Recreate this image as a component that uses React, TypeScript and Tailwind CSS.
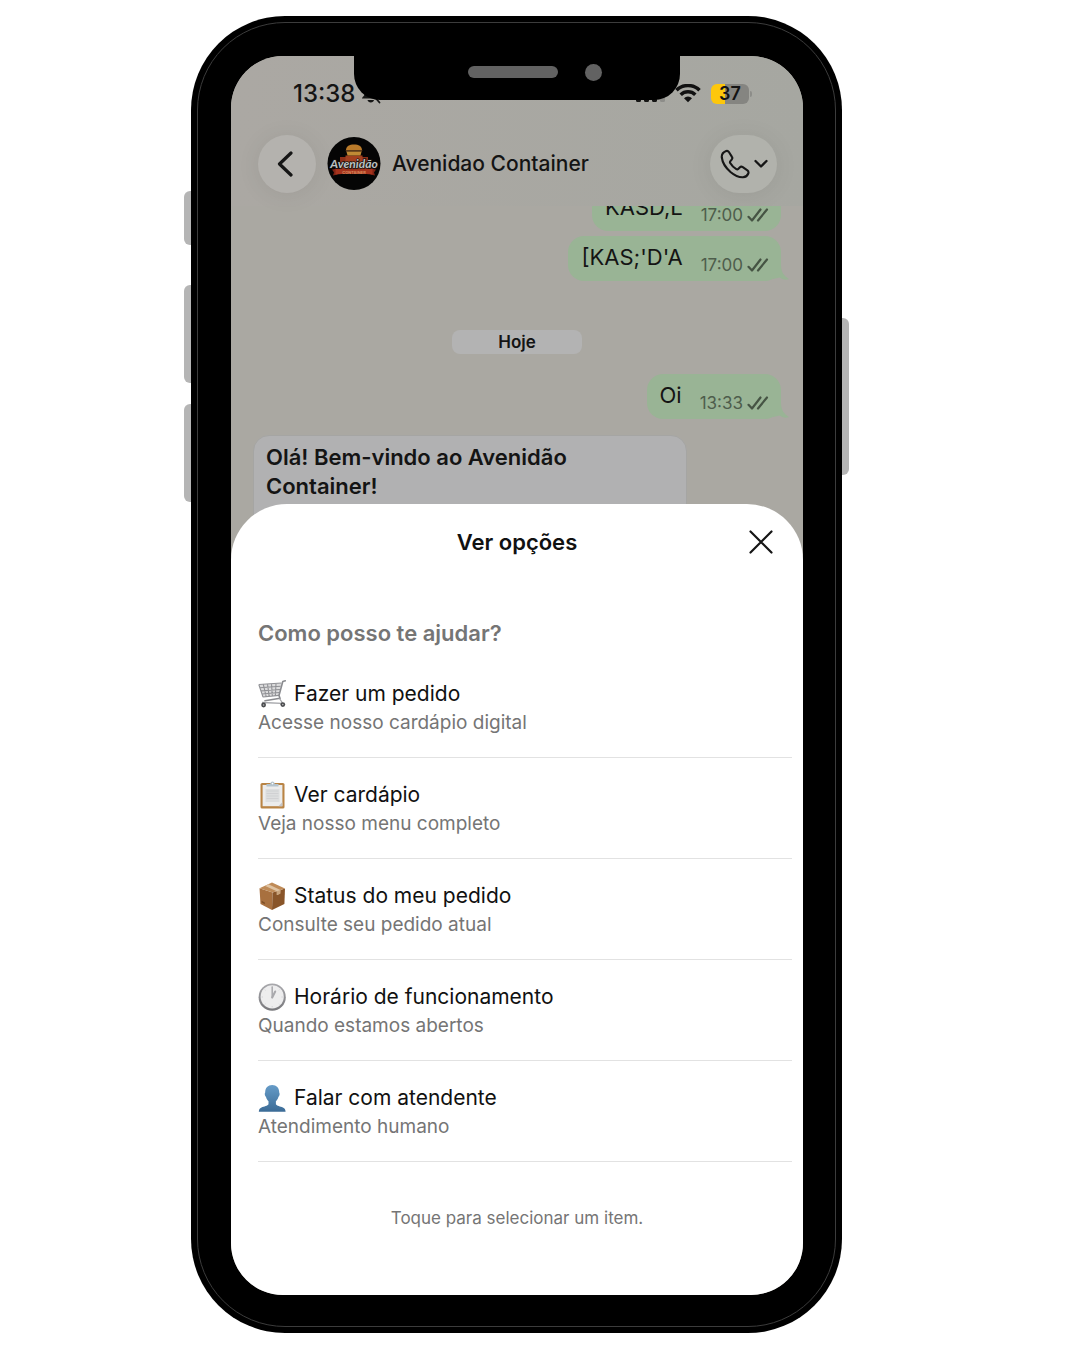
import type { ReactNode } from "react";

interface Option {
  id: string;
  title: string;
  description: string;
  icon: ReactNode;
}

const OPTIONS: Option[] = [
  { id: "order", title: "Fazer um pedido", description: "Acesse nosso cardápio digital", icon: <CartIcon /> },
  { id: "menu", title: "Ver cardápio", description: "Veja nosso menu completo", icon: <ClipboardIcon /> },
  { id: "status", title: "Status do meu pedido", description: "Consulte seu pedido atual", icon: <BoxIcon /> },
  { id: "hours", title: "Horário de funcionamento", description: "Quando estamos abertos", icon: <ClockIcon /> },
  { id: "agent", title: "Falar com atendente", description: "Atendimento humano", icon: <PersonIcon /> },
];

function CartIcon() {
  return (
    <svg viewBox="0 0 28 28" className="size-7 shrink-0" fill="none" aria-hidden="true">
      <path d="M.8 4.500 23.500 3 21 15.400 5 17z" fill="#dcdcdd" />
      <path
        d="M.8 4.500 23.500 3M1.800 7.700l20.800-1.400M2.900 10.900l19-1.400M4 14l17.300-1.500M5 17l16-1.600M.8 4.500 5 17M5.300 4.300l2.900 12.300M9.500 4l1.700 12.300M13.500 3.800l.8 12.200M18 3.500l-.6 12.100"
        stroke="#909195"
        strokeWidth="1.100"
      />
      <path d="M27.300.8 24.800 1.500 21 15.500 22 18.300 7 20.800" stroke="#8a8b8f" strokeWidth="1.600" strokeLinecap="round" strokeLinejoin="round" />
      <path d="m21.500 18.500 3 4.500M4 22.500l20 .8" stroke="#a5a6aa" strokeWidth="1.300" />
      <circle cx="5.600" cy="25" r="2.400" fill="#4b4c4f" />
      <circle cx="24.800" cy="24.600" r="2.400" fill="#4b4c4f" />
      <circle cx="5.600" cy="25" r=".8" fill="#bbb" />
      <circle cx="24.800" cy="24.600" r=".8" fill="#bbb" />
    </svg>
  );
}

function ClipboardIcon() {
  return (
    <svg viewBox="0 0 28 28" className="size-7 shrink-0" fill="none" aria-hidden="true">
      <rect x="2.500" y="2" width="24" height="25.500" rx="1.600" fill="#b98445" />
      <rect x="4.600" y="4" width="19.800" height="21.200" fill="#ececec" />
      <path d="M20.500 25.200 24.400 21v4.200z" fill="#c6c6c8" />
      <path d="M7.500 8h14v13h-14z" fill="#dddedf" />
      <path d="M8.500 10h12M8.500 12.500h12M8.500 15h12M8.500 17.500h12" stroke="#d0d1d3" strokeWidth="1.200" />
      <path d="M8.500 5.600V3h3.700C12.400 1.400 13.200.5 14.500.5s2.100.9 2.300 2.500h3.700v2.600z" fill="#b4c3cd" />
      <circle cx="14.500" cy="2.600" r=".8" fill="#fff" />
    </svg>
  );
}

function BoxIcon() {
  return (
    <svg viewBox="0 0 28 28" className="size-7 shrink-0" fill="none" aria-hidden="true">
      <path d="M1.500 6.200 14.600 10.600 14 28 2.500 22z" fill="#a8703f" />
      <path d="M14.600 10.600 27 6.600 26.400 22 14 28z" fill="#895529" />
      <path d="M1.500 6.200 14 .6 27 6.600 14.600 10.600z" fill="#bf8b58" />
      <path d="M7.200 3.900 10.400 2.300 22.400 7.900 22.200 11.800 18.800 13V9.300z" fill="#dfc3a2" />
      <path d="m18.800 9.300 3.600-1.400-.2 3.900-3.400 1.200z" fill="#c9a47c" />
      <path d="m3.600 18.800 3.200 1.600v1.900l-3.200-1.700z" fill="#7e4e26" />
    </svg>
  );
}

function ClockIcon() {
  return (
    <svg viewBox="0 0 28 28" className="size-7 shrink-0" fill="none" aria-hidden="true">
      <defs>
        <linearGradient id="clock-rim" x1="0" y1="0" x2="0" y2="1">
          <stop offset="0" stopColor="#a9a9ad" />
          <stop offset="1" stopColor="#77777b" />
        </linearGradient>
      </defs>
      <circle cx="14.200" cy="14.200" r="13.600" fill="url(#clock-rim)" />
      <circle cx="14.200" cy="13.800" r="11.600" fill="#ededee" />
      <path
        d="M14.200 3.400v1.400M14.200 23v1.400M3.600 14H5M23.400 14h1.400M6.700 6.500l.8.8M21 20.800l.7.7M6.700 21.500l.8-.7M21.700 6.500l-.8.8"
        stroke="#d3d3d6"
        strokeWidth="1"
      />
      <path d="M14.200 14.500V4" stroke="#a8a8ac" strokeWidth="1.500" strokeLinecap="round" />
      <path d="m14.200 14.500 3-6" stroke="#a8a8ac" strokeWidth="2" strokeLinecap="round" />
    </svg>
  );
}

function PersonIcon() {
  return (
    <svg viewBox="0 0 28 28" className="size-7 shrink-0" aria-hidden="true">
      <defs>
        <linearGradient id="person-fill" x1="0" y1="0" x2="0" y2="1">
          <stop offset="0" stopColor="#669cc8" />
          <stop offset="1" stopColor="#3b6b96" />
        </linearGradient>
      </defs>
      <path
        d="M14.200.9c4.300 0 7 2.900 7 7.200 0 1 .5 1.200.4 2.300-.1 1.300-.8 1.500-1.200 2.600-.6 2.200-1.500 3.300-2.500 4.300v3c.8 1.700 4.500 2.200 7 3.200 1.900.8 2.500 2.100 2.700 4.300H.8c.2-2.200.8-3.500 2.700-4.300 2.500-1 6.200-1.500 7-3.200v-3c-1-1-1.900-2.100-2.500-4.300-.4-1.100-1.100-1.300-1.200-2.600-.1-1.100.4-1.300.4-2.300 0-4.300 2.700-7.200 7-7.200z"
        fill="url(#person-fill)"
      />
    </svg>
  );
}

function MutedBellIcon() {
  return (
    <svg viewBox="0 0 20 20" className="size-5" fill="#161615" aria-hidden="true">
      <path d="M1 14.500c0-1.500 3-2.500 3-6.500 0-3.500 2.500-6 6-6s6 2.500 6 6c0 4 1 5 1 6.500z" />
      <path d="M6.500 16h6.500c-.3 1.600-1.500 2.500-3.200 2.500S6.800 17.600 6.500 16z" />
      <path d="m2.500 1 15 17" stroke="#aba9a4" strokeWidth="3" />
      <path d="m4 2 14.500 16.500" stroke="#161615" strokeWidth="1.800" strokeLinecap="round" />
    </svg>
  );
}

function SignalIcon() {
  return (
    <svg viewBox="0 0 29 20" className="h-5 w-[29px]" fill="#161615" aria-hidden="true">
      <rect x="0" y="12" width="5" height="6" rx="1.500" />
      <rect x="8" y="9" width="5" height="9" rx="1.500" />
      <rect x="16" y="5" width="5" height="13" rx="1.500" />
      <rect x="24" y="1" width="5" height="17" rx="1.500" fill="#8d8d89" />
    </svg>
  );
}

function WifiIcon() {
  return (
    <svg viewBox="0 0 26 20" className="h-5 w-[26px]" fill="none" stroke="#111" strokeWidth="3.500" aria-hidden="true">
      <path d="M1.500 6.200a16.500 16.500 0 0 1 23 0" />
      <path d="M5.700 10.800a10.500 10.500 0 0 1 14.600 0" />
      <path d="M13 18.200 9 14.200a5.800 5.800 0 0 1 8 0z" fill="#111" stroke="none" />
    </svg>
  );
}

function Checks() {
  return (
    <svg viewBox="0 0 22 14" className="h-3.5 w-[22px]" fill="none" stroke="#465444" strokeWidth="2.200" strokeLinecap="round" strokeLinejoin="round" aria-hidden="true">
      <path d="m1.500 8.800 3.500 3.700L13.500 1.500" />
      <path d="M11 12.500 20 1.500" />
    </svg>
  );
}

function Avatar() {
  return (
    <svg viewBox="0 0 54 54" className="size-[54px] shrink-0" role="img" aria-label="Avenidão Container">
      <circle cx="27" cy="26.500" r="26.500" fill="#050505" />
      <path d="M13 20h28v17H13z" fill="#8c2f19" />
      <path d="M18.500 18.500h17V28h-17z" fill="#a3401f" />
      <path d="M19 13c.3-4 3.300-5.500 8-5.500s7.700 1.500 8 5.500z" fill="#b97a2a" />
      <path d="M18.500 13h17l-.8 2H19.300z" fill="#5b3a1a" />
      <path d="M19.500 14.800h15l-1 3.700h-13z" fill="#c08a35" />
      <path d="M5 32.500l5.500-1v6l-4.500 1 1-3zM49 32.500l-5.500-1v6l4.500 1-1-3z" fill="#7e2314" />
      <path d="M8.500 31.500c12 1.500 25 1.500 37 0v6c-12-1.500-25-1.500-37 0z" fill="#a5331d" />
      <text
        x="27"
        y="30.500"
        textAnchor="middle"
        fontSize="12"
        fontStyle="italic"
        fontWeight="700"
        fontFamily="Lato, sans-serif"
        fill="#bcc2c2"
        stroke="#15110f"
        strokeWidth="1.500"
        paintOrder="stroke"
      >
        Avenidão
      </text>
      <text x="27" y="36.500" textAnchor="middle" fontSize="4" fontWeight="700" fontFamily="Inter, sans-serif" fill="#d8895c">
        CONTAINER
      </text>
    </svg>
  );
}

function StatusBar() {
  return (
    <div className="flex h-[76px] items-center justify-between pr-[51px] pl-[62px]">
      <div className="flex items-center gap-1.5">
        <span className="text-[24px] leading-7 font-medium">13:38</span>
        <MutedBellIcon />
      </div>
      <div className="flex items-center gap-2.5">
        <SignalIcon />
        <WifiIcon />
        <div className="flex items-center gap-px">
          <span className="flex h-5 w-[38px] items-center justify-center rounded-md bg-linear-to-r from-[#fdc70b] from-37% to-[#858581] to-37% text-[18px] leading-5 font-semibold">
            37
          </span>
          <span className="h-1.5 w-0.5 rounded-r-full bg-[#8d8d89]" />
        </div>
      </div>
    </div>
  );
}

function ChatHeader() {
  return (
    <div className="flex items-center gap-[11px] pt-[3px] pr-[26px] pb-[13px] pl-[27px]">
      <button
        type="button"
        aria-label="Voltar"
        className="flex size-[58px] shrink-0 items-center justify-center rounded-full bg-[#b4b2ae] shadow-[0_2px_24px_rgba(0,0,0,0.07)]"
      >
        <svg viewBox="0 0 16 28" className="mr-1 h-7 w-4" fill="none" stroke="#161616" strokeWidth="3.200" strokeLinecap="round" strokeLinejoin="round" aria-hidden="true">
          <path d="M14 3 2.500 14 14 25" />
        </svg>
      </button>
      <Avatar />
      <h1 className="min-w-0 flex-1 truncate text-[21px] leading-7 font-medium">Avenidao Container</h1>
      <button
        type="button"
        aria-label="Ligar"
        className="flex h-[58px] w-[67px] shrink-0 items-center justify-center gap-1 rounded-full bg-[#b1b2ac] shadow-[0_2px_24px_rgba(0,0,0,0.07)]"
      >
        <svg viewBox="0 0 30 30" className="size-[30px]" fill="none" stroke="#161616" strokeWidth="2.100" strokeLinejoin="round" aria-hidden="true">
          <path d="M6.200 2C3.500 3 1.500 5.500 1.800 8.500 2.500 14 6 19 10.500 23c4 3.400 8.500 5.500 12.500 5.300 2.500-.2 4.500-1.800 5.300-3.800.5-1.300.1-2.300-.9-3.100l-4.600-3.200c-1.100-.8-2.200-.7-3.100.2l-1.500 1.500c-.6.6-1.200.6-1.900.2-2.500-1.500-4.700-3.700-6.100-6.100-.4-.7-.3-1.300.2-1.900l1.300-1.500c.8-.9.8-2 .1-3L8.900 3C8.200 2 7.300 1.600 6.200 2z" />
        </svg>
        <svg viewBox="0 0 14 10" className="h-2.5 w-3.5" fill="none" stroke="#161616" strokeWidth="2.300" strokeLinecap="round" strokeLinejoin="round" aria-hidden="true">
          <path d="m1.500 2 5.500 5.500L12.500 2" />
        </svg>
      </button>
    </div>
  );
}

function SentBubble({ text, time, tail = true }: { text: string; time: string; tail?: boolean }) {
  return (
    <div className="relative flex h-[45px] items-start gap-[18px] rounded-2xl bg-[#99b495] pr-3 pl-[13px]">
      <span className="pt-[7px] text-[22px] leading-7">{text}</span>
      <span className="flex items-center gap-1 pt-[19px] text-[17px] leading-5 text-[#4e5d4c]">
        {time}
        <Checks />
      </span>
      {tail && (
        <svg viewBox="0 0 18 18" className="absolute -right-2 bottom-0 size-[18px]" fill="#99b495" aria-hidden="true">
          <path d="M2 16V2h8c0 7 3 11 8 14-3 1.500-7 .5-9-1.500z" />
        </svg>
      )}
    </div>
  );
}

function ChatHistory() {
  return (
    <div className="overflow-hidden px-[22px]">
      <div className="-mt-5 flex flex-col items-end gap-[5px]">
        <SentBubble text="KASD,L" time="17:00" tail={false} />
        <SentBubble text="[KAS;'D'A" time="17:00" />
      </div>
      <div className="mx-auto mt-[49px] mb-5 w-[130px] rounded-lg bg-[#b3b3b3] text-center text-[17px] leading-6 font-semibold">
        Hoje
      </div>
      <div className="flex justify-end">
        <SentBubble text="Oi" time="13:33" />
      </div>
      <div className="mt-4 h-[129px] max-w-[434px] rounded-2xl border border-[#a5a5a3] bg-[#b1b1b2] px-3 pt-[7px]">
        <p className="max-w-[340px] text-[22px] leading-[29px] font-semibold">Olá! Bem-vindo ao Avenidão Container!</p>
      </div>
    </div>
  );
}

function OptionsSheet() {
  return (
    <section role="dialog" aria-labelledby="sheet-title" className="relative -mt-[60px] rounded-t-[56px] bg-white pb-[65px] text-[#111]">
      <header className="grid grid-cols-[1fr_auto_1fr] items-center px-[26px] pt-[18px]">
        <h2 id="sheet-title" className="col-start-2 text-[22px] leading-10 font-semibold">
          Ver opções
        </h2>
        <button type="button" aria-label="Fechar" className="flex size-8 items-center justify-center justify-self-end">
          <svg viewBox="0 0 24 24" className="size-6" fill="none" stroke="#151515" strokeWidth="2.200" strokeLinecap="round" aria-hidden="true">
            <path d="m1.500 1.500 21 21M22.500 1.500l-21 21" />
          </svg>
        </button>
      </header>
      <h3 className="mt-[55px] px-[27px] text-[22px] leading-8 font-semibold text-[#757575]">Como posso te ajudar?</h3>
      <ul className="mt-2 pr-[11px] pl-[27px]">
        {OPTIONS.map((option) => (
          <li key={option.id} className="border-b border-[#e2e2e2]">
            <button type="button" className="block w-full pt-[22px] pb-5 text-left">
              <span className="flex items-center gap-2 text-[21px] leading-[29px]">
                {option.icon}
                {option.title}
              </span>
              <span className="block text-[19px] leading-[29px] text-[#757575]">{option.description}</span>
            </button>
          </li>
        ))}
      </ul>
      <p className="mt-11 text-center text-[17px] leading-6 text-[#757575]">Toque para selecionar um item.</p>
    </section>
  );
}

export default function App() {
  return (
    <main className="flex min-h-screen justify-center bg-white pt-4 pr-[47px] pb-4 font-['Inter','Liberation_Sans',sans-serif] text-[#141414]">
      <div className="relative w-full max-w-[651px] self-start">
        <span className="absolute top-[175px] -left-[7px] h-[54px] w-4 rounded-l-md bg-[#b5b5b5]" />
        <span className="absolute top-[269px] -left-[7px] h-[98px] w-4 rounded-l-md bg-[#b5b5b5]" />
        <span className="absolute top-[388px] -left-[7px] h-[98px] w-4 rounded-l-md bg-[#b5b5b5]" />
        <span className="absolute top-[302px] -right-[7px] h-[157px] w-4 rounded-r-md bg-[#b5b5b5]" />
        <div className="relative rounded-[94px] bg-black p-1.5">
          <div className="rounded-[88px] border border-[#3c3c3c] pt-[33px] pr-8 pb-[31px] pl-[33px]">
            <div className="relative overflow-hidden rounded-[52px] bg-[#aaa8a2]">
              <div className="bg-linear-to-r from-[#aba8a3] to-[#a6a7a1]">
                <StatusBar />
                <ChatHeader />
              </div>
              <ChatHistory />
              <OptionsSheet />
              {/* notch sits above the status bar and hides part of its icons */}
              <div className="absolute top-0 left-1/2 flex h-11 w-[326px] -translate-x-1/2 items-center rounded-b-[26px] bg-black pb-3">
                <span className="ml-[114px] h-3 w-[90px] rounded-full bg-[#626262]" />
                <span className="ml-[27px] size-[17px] rounded-full bg-[#626262]" />
              </div>
            </div>
          </div>
        </div>
      </div>
    </main>
  );
}
